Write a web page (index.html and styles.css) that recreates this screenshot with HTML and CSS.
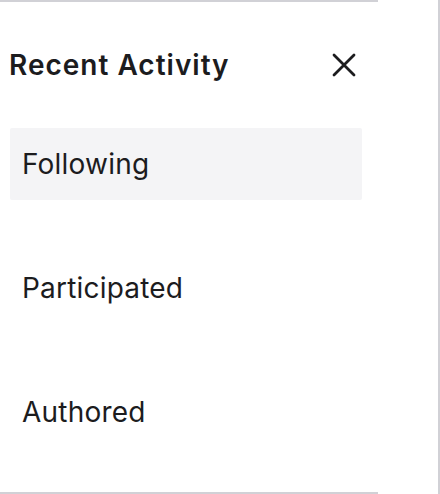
FILE: index.html
```html
<!DOCTYPE html>
<html lang="en">
<head>
<meta charset="utf-8">
<title>Recent Activity</title>
<link rel="stylesheet" href="styles.css">
</head>
<body>
<div class="page">
  <aside class="panel">
    <header class="panel-header">
      <h2 class="panel-title">Recent Activity</h2>
      <button class="close-btn" aria-label="Close">
        <svg width="24" height="24" viewBox="0 0 24 24" aria-hidden="true">
          <path d="M2 2 L22 22 M22 2 L2 22" stroke="#1c1c1e" stroke-width="2.8" stroke-linecap="round" fill="none"/>
        </svg>
      </button>
    </header>
    <ul class="menu">
      <li class="menu-item active">Following</li>
      <li class="menu-item">Participated</li>
      <li class="menu-item">Authored</li>
    </ul>
  </aside>
  <div class="edge"></div>
</div>
</body>
</html>
```
FILE: styles.css
```css
html, body {
  margin: 0;
  padding: 0;
  background: #ffffff;
}
body {
  font-family: Inter, "Noto Sans", "Liberation Sans", sans-serif;
  color: #1c1c1e;
}
.page {
  width: 440px;
  height: 494px;
  display: flex;
  justify-content: space-between;
}
.panel {
  width: 378px;
  box-sizing: border-box;
  border-top: 2px solid #d1d1d6;
  border-bottom: 2px solid #d1d1d6;
  display: flex;
  flex-direction: column;
}
.edge {
  width: 2px;
  background: #d1d1d6;
}
.panel-header {
  height: 125px;
  display: flex;
  align-items: center;
  justify-content: space-between;
  padding: 0 22px 0 9px;
}
.panel-title {
  margin: 0;
  font-size: 28px;
  font-weight: 600;
  letter-spacing: 1px;
}
.close-btn {
  border: 0;
  background: none;
  padding: 0;
  width: 24px;
  height: 24px;
  display: flex;
}
.menu {
  list-style: none;
  margin: 1px 0 0;
  padding: 0 16px 0 10px;
  display: flex;
  flex-direction: column;
  gap: 52px;
}
.menu-item {
  height: 72px;
  display: flex;
  align-items: center;
  padding-left: 12px;
  font-size: 28px;
  font-weight: 400;
  letter-spacing: 0.2px;
  border-radius: 2px;
}
.menu-item.active {
  background: #f4f4f6;
}
```
